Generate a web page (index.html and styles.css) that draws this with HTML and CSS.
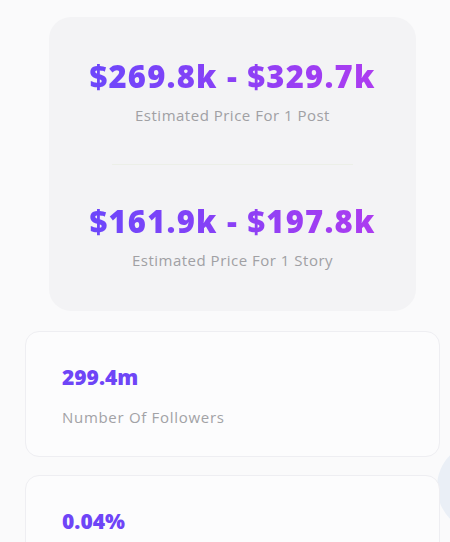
FILE: index.html
```html
<!DOCTYPE html>
<html>
<head>
<meta charset="utf-8">
<link rel="stylesheet" href="styles.css">
</head>
<body>
<div class="blob"></div>
<main class="page">
  <section class="price-card">
    <div class="price-block">
      <div class="price">$269.8k - $329.7k</div>
      <div class="caption">Estimated Price For 1 Post</div>
    </div>
    <hr class="divider">
    <div class="price-block">
      <div class="price">$161.9k - $197.8k</div>
      <div class="caption">Estimated Price For 1 Story</div>
    </div>
  </section>
  <section class="stat-card">
    <div class="stat-value">299.4m</div>
    <div class="stat-label">Number Of Followers</div>
  </section>
  <section class="stat-card">
    <div class="stat-value">0.04%</div>
  </section>
</main>
</body>
</html>
```
FILE: styles.css
```css
html, body {
  margin: 0;
  padding: 0;
}
body {
  background: #fafafb;
  font-family: "Open Sans", "Liberation Sans", sans-serif;
  overflow: hidden;
  height: 542px;
  position: relative;
}
.blob {
  position: absolute;
  left: 437px;
  top: 442px;
  width: 90px;
  height: 90px;
  border-radius: 50%;
  background: #eaeff6;
}
.page {
  position: relative;
  padding-top: 17px;
}
.price-card {
  margin-left: 49px;
  width: 367px;
  height: 294px;
  box-sizing: border-box;
  border-radius: 22px;
  background: #f3f3f5;
  padding-top: 40px;
  display: flex;
  flex-direction: column;
  align-items: center;
}
.price-block {
  display: flex;
  flex-direction: column;
  align-items: center;
}
.price {
  font-family: "Open Sans", sans-serif;
  font-weight: 800;
  font-size: 31px;
  line-height: 38px;
  letter-spacing: 1.2px;
  background: linear-gradient(90deg, #6c47fb 0%, #8a40f6 50%, #ad3cf0 100%);
  -webkit-background-clip: text;
  background-clip: text;
  color: transparent;
}
.caption {
  margin-top: 10px;
  font-size: 15px;
  line-height: 20px;
  letter-spacing: 0.5px;
  color: #a0a0a4;
}
.divider {
  width: 241px;
  border: 0;
  height: 1px;
  background: #ecefe8;
  margin: 39px 0 37px;
}
.stat-card {
  margin: 20px 0 0 25px;
  width: 415px;
  box-sizing: border-box;
  border: 1px solid #eeeef2;
  border-radius: 14px;
  background: #fcfcfd;
  padding: 32px 36px 29px;
}
.stat-card + .stat-card {
  margin-top: 18px;
  height: 120px;
}
.stat-value {
  font-weight: 800;
  font-size: 21px;
  line-height: 26px;
  color: #6e45f7;
}
.stat-label {
  margin-top: 17px;
  font-size: 15px;
  line-height: 20px;
  letter-spacing: 0.7px;
  color: #a2a2a6;
}
```
